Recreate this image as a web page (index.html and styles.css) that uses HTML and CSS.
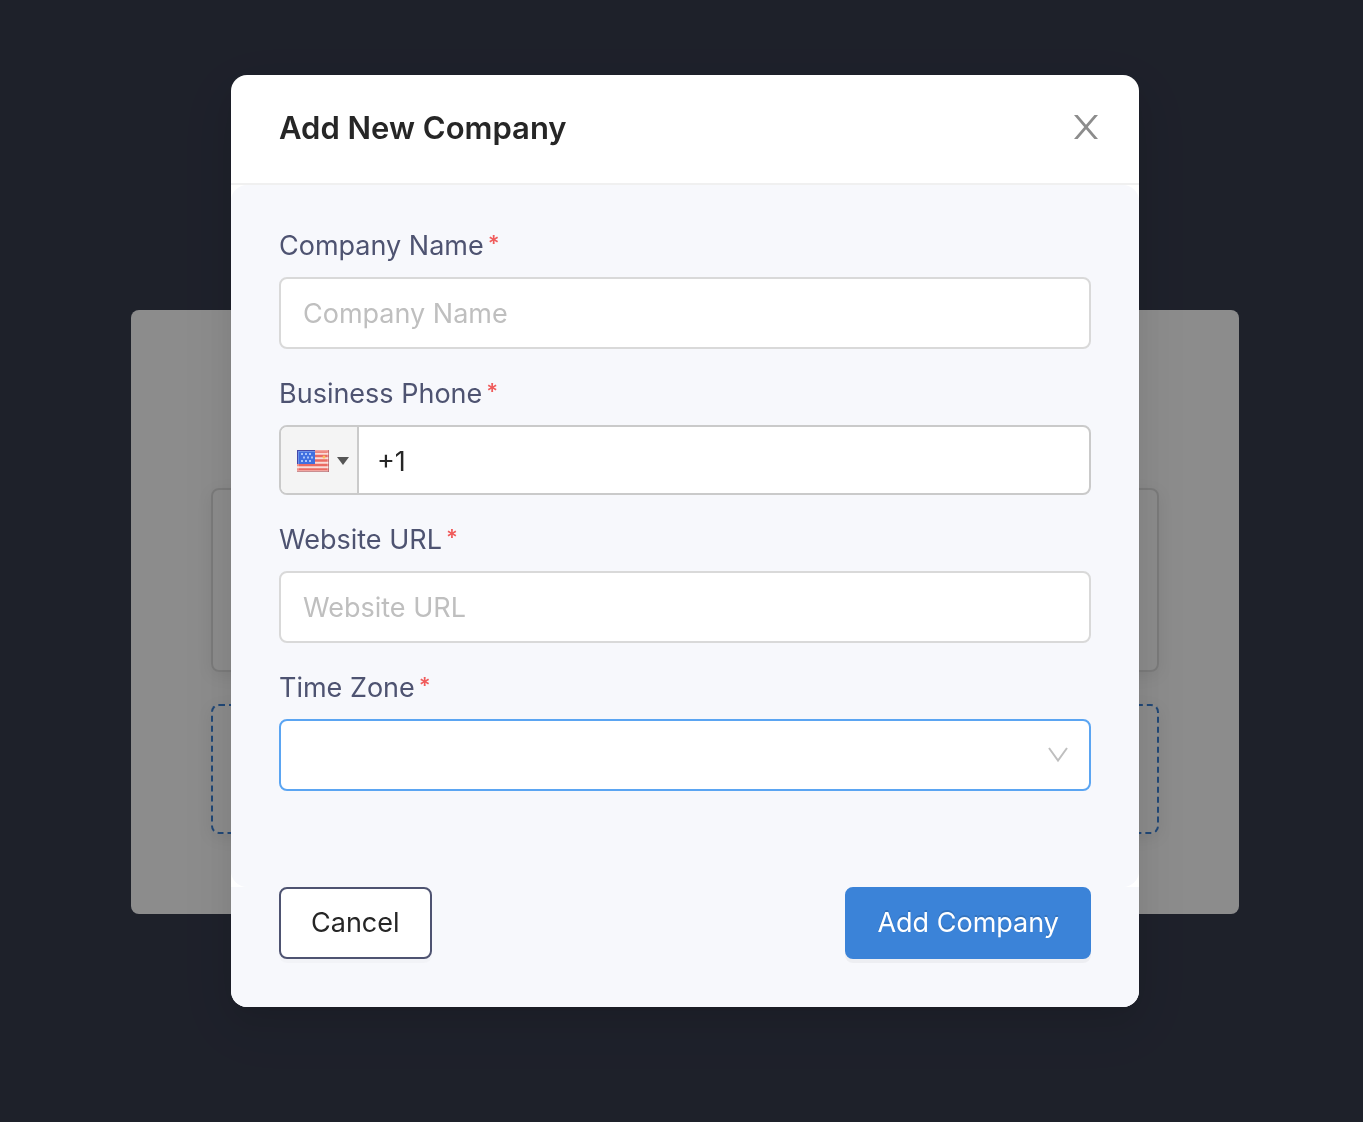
FILE: index.html
```html
<!DOCTYPE html>
<html lang="en">
  <head>
    <meta charset="UTF-8" />
    <meta name="viewport" content="width=device-width, initial-scale=1.0" />
    <title>Add New Company</title>
    <link rel="stylesheet" href="styles.css">
  </head>
  <body>
    <main class="page">
      <div class="panel">
        <div class="panel-card"></div>
        <div class="panel-card panel-card-dashed"></div>
      </div>
    </main>

    <div class="mask">
      <form class="modal" role="dialog" aria-labelledby="modal-title">
        <header class="modal-header">
          <h1 class="modal-title" id="modal-title">Add New Company</h1>
          <button class="close" type="button" aria-label="Close">
            <svg width="24" height="26" viewBox="0 0 24 26">
              <path d="M0 1h3.600L12 10.800 20.400 1H24L13.800 13 24 25h-3.600L12 15.200 3.600 25H0L10.200 13z" fill="#8c8c8c" />
            </svg>
          </button>
        </header>

        <div class="modal-body">
          <div class="field">
            <label class="label" for="company">Company Name<span class="required">*</span></label>
            <input class="input" id="company" type="text" placeholder="Company Name" />
          </div>
          <div class="field">
            <label class="label" for="phone">Business Phone<span class="required">*</span></label>
            <div class="phone">
              <button class="country" type="button" aria-label="Country: United States">
                <svg width="32" height="22" viewBox="0 0 32 22">
                  <rect width="32" height="22" fill="#f9dcd8" />
                  <path d="M0 1.500h32M0 6h32M0 10.500h32M0 15h32M0 19.500h32" stroke="#ea6a62" stroke-width="2.400" />
                  <rect width="18" height="14" fill="#3f6fe0" />
                  <path d="M4 4h12M6 7.500h10M4 11h12" stroke="#a9c4f8" stroke-width="1.800" stroke-dasharray="2 2" />
                  <rect x="1" y="1" width="30" height="20" fill="none" stroke="#fff" stroke-opacity=".25" stroke-width="2" />
                  <path d="M.5 0v14M0 .5h18" stroke="#4648a8" />
                  <path d="M0 21.500h32M31.500 0v22" stroke="#a8545c" stroke-opacity=".6" />
                  <circle cx="27" cy="7" r="1.500" fill="#f9c060" />
                </svg>
                <svg width="12" height="8" viewBox="0 0 12 8">
                  <path d="M0 0h12L6 8z" fill="#555" />
                </svg>
              </button>
              <input class="phone-input" id="phone" type="tel" value="+1" />
            </div>
          </div>
          <div class="field">
            <label class="label" for="website">Website URL<span class="required">*</span></label>
            <input class="input" id="website" type="text" placeholder="Website URL" />
          </div>
          <div class="field">
            <label class="label" for="timezone">Time Zone<span class="required">*</span></label>
            <div class="select-wrap">
              <select class="input select" id="timezone">
                <option value=""></option>
              </select>
              <svg class="select-arrow" width="20" height="16" viewBox="0 0 20 16">
                <path d="M1 1l9 12.500L19 1" fill="none" stroke="#bfbfbf" stroke-width="2" />
              </svg>
            </div>
          </div>
        </div>

        <footer class="modal-footer">
          <button class="btn" type="button">Cancel</button>
          <button class="btn btn-primary" type="submit">Add Company</button>
        </footer>
      </form>
    </div>
  </body>
</html>
```
FILE: styles.css
```css
* {
  box-sizing: border-box;
}
body {
  margin: 0;
  min-height: 100vh;
  background-color: #373c4e;
  color: #262626;
  font-family: Inter, Roboto, sans-serif;
  font-size: 27px;
}
button,
input,
select {
  font: inherit;
  color: inherit;
}
.page {
  padding: 310px 0 0 7px;
}
.panel {
  display: flex;
  flex-direction: column;
  gap: 32px;
  max-width: 1108px;
  margin: 0 auto;
  padding: 178px 80px 80px;
  border-radius: 8px;
  background-color: #fff;
}
.panel-card {
  height: 184px;
  border: 2px solid #e0e0e0;
  border-radius: 8px;
  box-shadow: 0 4px 16px rgba(0, 0, 0, 0.08);
}
.panel-card-dashed {
  height: 130px;
  border: 2px dashed #3b82d8;
}
.mask {
  position: fixed;
  inset: 0;
  overflow: auto;
  padding: 75px 0 75px 7px;
  background-color: rgba(0, 0, 0, 0.45);
}
.modal {
  max-width: 908px;
  margin: 0 auto;
  border-radius: 16px;
  background-color: #fff;
  box-shadow: 0 6px 12px -8px rgba(0, 0, 0, 0.12),
    0 12px 32px rgba(0, 0, 0, 0.08), 0 18px 56px 16px rgba(0, 0, 0, 0.05);
}
.modal-header {
  display: flex;
  justify-content: space-between;
  align-items: center;
  height: 110px;
  padding: 0 41px 4px 48px;
  border-bottom: 2px solid #f0f0f0;
}
.modal-title {
  margin: 0;
  font-size: 31px;
  font-weight: 600;
}
.close {
  display: flex;
  padding: 0;
  border: 0;
  background: none;
}
.modal-body {
  display: flex;
  flex-direction: column;
  gap: 24px;
  padding: 40px 48px 96px;
  border-radius: 16px;
  background-color: #f7f8fc;
}
.field {
  display: flex;
  flex-direction: column;
}
.label {
  display: flex;
  align-items: flex-start;
  gap: 4px;
  height: 52px;
  line-height: 42px;
  color: #4e5371;
}
.required {
  font-size: 22px;
  font-weight: 600;
  line-height: 36px;
  color: #f05b5b;
}
.input {
  width: 100%;
  height: 72px;
  padding: 0 22px;
  border: 2px solid #d9d9d9;
  border-radius: 8px;
  outline: 0;
  background-color: #fff;
}
.input::placeholder {
  color: #bfbfbf;
}
.phone {
  display: flex;
  height: 70px;
  border: 2px solid #cacaca;
  border-radius: 8px;
  overflow: hidden;
  background-color: #fff;
}
.country {
  display: flex;
  align-items: center;
  gap: 8px;
  padding: 2px 8px 0 16px;
  border: 0;
  border-right: 2px solid #cacaca;
  background-color: #f4f4f4;
}
.phone-input {
  flex: 1;
  min-width: 0;
  padding: 2px 18px 0;
  border: 0;
  outline: 0;
  background: none;
}
.select-wrap {
  position: relative;
}
.select {
  display: block;
  appearance: none;
  border-color: #5ba5f2;
}
.select-arrow {
  position: absolute;
  top: 28px;
  right: 23px;
  pointer-events: none;
}
.modal-footer {
  display: flex;
  justify-content: space-between;
  padding: 0 48px 48px;
  border-radius: 0 0 16px 16px;
  background-color: #f7f8fc;
}
.btn {
  height: 72px;
  padding: 0 30px 2px;
  border: 2px solid #4e5371;
  border-radius: 8px;
  background-color: #fff;
  box-shadow: 0 4px 0 rgba(0, 0, 0, 0.02);
}
.btn-primary {
  border-color: #3b83d8;
  background-color: #3b83d8;
  box-shadow: 0 4px 0 rgba(0, 0, 0, 0.04);
  color: #fff;
  text-shadow: 0 -2px 0 rgba(0, 0, 0, 0.12);
}
```
